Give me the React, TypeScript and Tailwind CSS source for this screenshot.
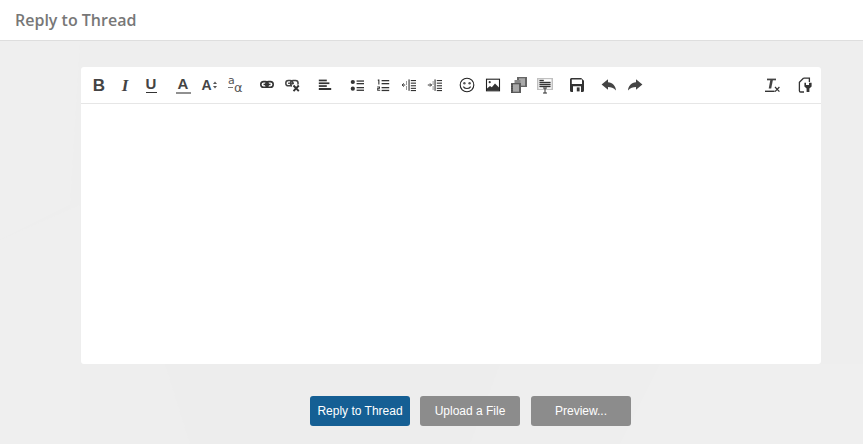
import React from "react";

const c = "#333";
const Svg = ({ children }: { children: React.ReactNode }) => (
  <svg width="18" height="18" viewBox="0 0 18 18" fill={c} className="block">
    {children}
  </svg>
);

const Btn = ({ children, className = "" }: { children: React.ReactNode; className?: string }) => (
  <div className={`w-[26px] h-[26px] flex items-center justify-center shrink-0 ${className}`}>{children}</div>
);

const Lines = ({ x, ys, w, h = 1.3 }: { x: number; ys: number[]; w: number; h?: number }) => (
  <>{ys.map((y) => <rect key={y} x={x} y={y} width={w} height={h} />)}</>
);

const Dots = ({ x }: { x: number }) => (
  <>{[5.5, 7.5, 10.5, 12.5].map((y) => <rect key={y} x={x} y={y} width="1" height="1" />)}</>
);

export default function App() {
  return (
    <div className="relative w-[863px] h-[444px] overflow-hidden bg-[#eeeeee]" style={{ fontFamily: '"Liberation Sans", sans-serif' }}>
      <svg className="absolute left-0 top-0" width="863" height="444" viewBox="0 0 863 444">
        <polygon points="0,41 80,41 70,205 0,240" fill="#efefef" />
        <polygon points="0,240 80,205 80,444 0,444" fill="#efefef" />
        <polygon points="165,364 190,444 470,444 500,364" fill="#ededed" />
        <polygon points="660,364 863,364 863,444 620,444" fill="#efefef" />
      </svg>
      <div className="relative flex flex-col h-full">
        <header className="h-[41px] shrink-0 bg-white border-b border-[#dedede] px-[15px] flex items-center">
          <h1 className="text-[16px] font-semibold text-[#777777] leading-none pb-px" style={{ fontFamily: '"Open Sans", sans-serif' }}>Reply to Thread</h1>
        </header>
        <div className="mt-[26px] ml-[81px] w-[740px] h-[297px] bg-white rounded-[3px] flex flex-col">
          <div className="h-[37px] shrink-0 border-b border-[#e6e6e6] pl-[5px] pr-[3px] pt-[5px] flex">
            <Btn><span className="text-[17px] font-bold text-[#444] leading-none">B</span></Btn>
            <Btn><span className="text-[17px] font-bold italic text-[#444] leading-none" style={{ fontFamily: '"Liberation Serif", serif' }}>I</span></Btn>
            <Btn>
              <span className="flex flex-col items-center">
                <span className="text-[15px] font-bold text-[#444] leading-[14px]">U</span>
                <span className="w-[11px] h-[1.5px] mt-px bg-[#333]" />
              </span>
            </Btn>
            <Btn className="ml-[6px]">
              <span className="flex flex-col items-center">
                <span className="text-[15px] font-bold text-[#444] leading-[14px]">A</span>
                <span className="w-[15px] h-[2px] mt-[1px] bg-[#909090]" />
              </span>
            </Btn>
            <Btn>
              <span className="flex items-center">
                <span className="text-[14px] font-bold text-[#444] leading-none">A</span>
                <svg width="4" height="8" viewBox="0 0 4 8" fill="#555" className="ml-px"><polygon points="0,3 2,0.5 4,3" /><polygon points="0,5 2,7.5 4,5" /></svg>
              </span>
            </Btn>
            <Btn>
              <span className="relative w-[16px] h-[16px] text-[#555]" style={{ fontFamily: '"DejaVu Sans", sans-serif' }}>
                <span className="absolute left-[1px] top-[-2px] text-[11px] leading-none">a</span>
                <span className="absolute left-[7px] top-[4px] text-[13px] leading-none">α</span>
                <span className="absolute left-[1px] top-[10px] w-[5px] h-px bg-[#777]" />
              </span>
            </Btn>
            <Btn className="ml-[6px]">
              <Svg>
                <rect x="2.8" y="5.6" width="7.4" height="5.6" rx="2.8" fill="none" stroke={c} strokeWidth="1.6" />
                <rect x="7.8" y="5.6" width="7.4" height="5.6" rx="2.8" fill="none" stroke={c} strokeWidth="1.6" />
                <rect x="5.5" y="7.7" width="7" height="1.5" />
              </Svg>
            </Btn>
            <Btn>
              <Svg>
                <rect x="1.8" y="4.6" width="7" height="5.2" rx="2.6" fill="none" stroke="#444" strokeWidth="1.5" />
                <rect x="6.5" y="4.6" width="7.6" height="5.2" rx="2.6" fill="none" stroke="#444" strokeWidth="1.5" />
                <rect x="4" y="6.6" width="6" height="1.3" fill="#444" />
                <rect x="8" y="8.5" width="8" height="8" fill="#fff" />
                <path d="M9.5 9.5 L14.8 15.2 M14.8 9.5 L9.5 15.2" stroke={c} strokeWidth="1.9" />
              </Svg>
            </Btn>
            <Btn className="ml-[6px]">
              <Svg>
                <rect x="2.8" y="3.6" width="8" height="1.7" />
                <rect x="2.8" y="6.4" width="10.6" height="1.7" />
                <rect x="2.8" y="9.2" width="8" height="1.7" />
                <rect x="2.8" y="12" width="12.4" height="2" />
              </Svg>
            </Btn>
            <Btn className="ml-[6px]">
              <Svg>
                <circle cx="4.8" cy="6" r="2.1" />
                <circle cx="4.8" cy="12.7" r="2.1" />
                <Lines x={8.6} ys={[4.4, 7, 11, 13.6]} w={7.4} />
              </Svg>
            </Btn>
            <Btn>
              <Svg>
                <path d="M3.8 3.6 H5.4 V8.6 H4.3 V4.7 H3.8 Z M3.2 10.4 H6 V12.8 H4.3 V13.7 H6.2 V14.7 H3.2 V12 H4.9 V11.4 H3.2 Z" />
                <Lines x={7.6} ys={[4, 7, 11, 13.8]} w={7.6} />
              </Svg>
            </Btn>
            <Btn>
              <Svg>
                <rect x="8.5" y="3.4" width="1.1" height="11.4" />
                <Lines x={10.8} ys={[4, 6.6, 9.2, 11.8, 14]} w={5.2} h={1.1} />
                <Dots x={6} />
                <path d="M2 9 H5.2 M3.8 7.4 L2.1 9 L3.8 10.6" fill="none" stroke={c} strokeWidth="1" />
              </Svg>
            </Btn>
            <Btn>
              <Svg>
                <rect x="8.5" y="3.4" width="1.1" height="11.4" />
                <Lines x={10.8} ys={[4, 6.6, 9.2, 11.8, 14]} w={5.2} h={1.1} />
                <Dots x={6.6} />
                <path d="M1.8 9 H5.4 M4 7.4 L5.6 9 L4 10.6" fill="none" stroke={c} strokeWidth="1" />
              </Svg>
            </Btn>
            <Btn className="ml-[6px]">
              <Svg>
                <circle cx="9" cy="9" r="6.8" fill="none" stroke="#222" strokeWidth="1.1" />
                <circle cx="6.4" cy="7.2" r="1.2" fill="#555" />
                <circle cx="11.6" cy="7.2" r="1.2" fill="#555" />
                <path d="M5.3 10.6 C7 13.2 11 13.2 12.7 10.6" fill="none" stroke="#333" strokeWidth="1.1" />
              </Svg>
            </Btn>
            <Btn>
              <Svg>
                <rect x="2.5" y="3.2" width="13" height="11.6" fill="none" stroke="#222" strokeWidth="1.1" />
                <circle cx="5.7" cy="6.2" r="1.1" />
                <path d="M3 14.4 V12.4 L6 10 L7.8 11.2 L11 7.6 L15 11.6 V14.4 Z" />
              </Svg>
            </Btn>
            <Btn>
              <Svg>
                <rect x="7" y="1" width="10" height="10" fill="#666" />
                <rect x="9" y="2.3" width="6" height="7.4" fill="#aaa" />
                <rect x="4.5" y="4" width="6" height="6" fill="#888" />
                <rect x="1" y="7" width="10" height="10" fill="#5c5c5c" />
                <rect x="3" y="8.3" width="6" height="7.4" fill="#a8a8a8" />
                <Lines x={1.6} ys={[8, 10, 12, 14, 16]} w={0.8} h={0.8} />
              </Svg>
            </Btn>
            <Btn>
              <Svg>
                <rect x="1" y="2" width="16" height="12" fill="#c0c0c0" />
                <rect x="2.5" y="3.2" width="13" height="9.6" fill="#fff" />
                <rect x="3.4" y="3.8" width="4.4" height="1.4" />
                <Lines x={3.4} ys={[5.8, 7.8, 9.8]} w={11.2} h={1.4} />
                <path d="M9 11.8 V17.2 M7 12 H11 M7 17 H11" fill="none" stroke={c} strokeWidth="1" />
              </Svg>
            </Btn>
            <Btn className="ml-[6px]">
              <Svg>
                <path fillRule="evenodd" d="M3.4 2 H13.2 L16 4.8 V14.4 A1.6 1.6 0 0 1 14.4 16 H3.6 A1.6 1.6 0 0 1 2 14.4 V3.6 A1.6 1.6 0 0 1 3.4 2 Z M3.8 3.6 V8 H14 V3.6 Z M5 10.2 V16 H13 V10.2 Z" />
                <rect x="8.8" y="11.4" width="2.8" height="4" />
              </Svg>
            </Btn>
            <Btn className="ml-[6px]">
              <Svg>
                <path d="M8 3.2 L1.6 8.6 L8 13.8 V11 C11 11 13.6 11.6 16 14.4 C15.6 9.8 12.6 6.6 8 6.2 Z" fill="#444" />
              </Svg>
            </Btn>
            <Btn>
              <Svg>
                <path d="M10 3.2 L16.4 8.6 L10 13.8 V11 C7 11 4.4 11.6 2 14.4 C2.4 9.8 5.4 6.6 10 6.2 Z" fill="#444" />
              </Svg>
            </Btn>
            <div className="flex-1" />
            <Btn>
              <Svg>
                <rect x="4" y="2.6" width="9" height="1.7" fill="#444" />
                <path d="M7.4 3.5 H10 L8.2 12.6 H5.7 Z" fill="#444" />
                <rect x="2" y="14.6" width="9.6" height="1.4" />
                <path d="M12 11 L16.4 15.6 M16.4 11 L12 15.6" stroke={c} strokeWidth="1.2" />
              </Svg>
            </Btn>
            <Btn className="ml-[7px]">
              <Svg>
                <path d="M7.4 2.2 H13.4 V6 M7.4 2.2 L3.4 6.2 V14.8 C3.4 15.4 4 16 4.6 16 H8" fill="none" stroke={c} strokeWidth="1.3" />
                <path d="M10 6.8 V9 H13 V6.8 H15.6 V10.4 L13.4 12.4 V16 H10.6 V12.4 L8.4 10.4 V6.8 Z" />
              </Svg>
            </Btn>
          </div>
        </div>
        <div className="mt-[32px] ml-[310px] flex">
          <button className="w-[100px] h-[30px] rounded-[3px] bg-[#155f94] text-white text-[12px]">Reply to Thread</button>
          <button className="ml-[10px] w-[100px] h-[30px] rounded-[3px] bg-[#8c8c8c] text-white text-[12px]">Upload a File</button>
          <button className="ml-[11px] w-[100px] h-[30px] rounded-[3px] bg-[#8c8c8c] text-white text-[12px]">Preview...</button>
        </div>
      </div>
    </div>
  );
}
